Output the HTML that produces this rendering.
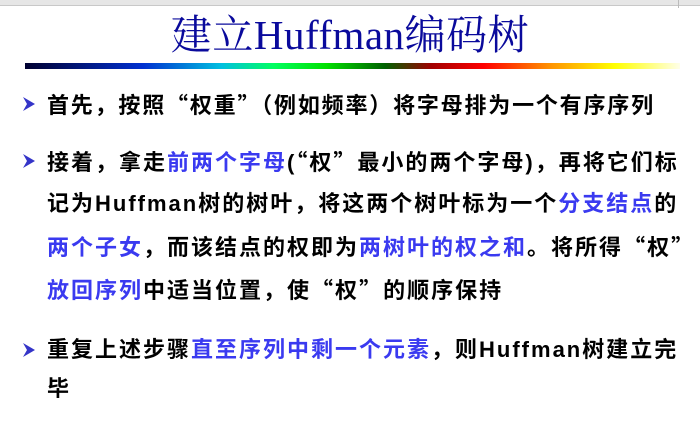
<!DOCTYPE html>
<html><head><meta charset="utf-8"><style>
body{margin:0;width:700px;height:424px;background:#fff;position:relative;overflow:hidden;font-family:"Liberation Sans","Noto Sans CJK SC",sans-serif;}
.top{position:absolute;left:0;top:0;width:700px;height:5px;background:#e6e6e6;border-bottom:1px solid #c8c8c8}
.vr{position:absolute;left:678px;top:0;width:1px;height:8px;background:#bbb}
.title{position:absolute;left:0;width:700px;top:12px;text-align:center;font-family:"Liberation Serif","Noto Serif CJK SC",serif;font-size:41px;color:#0a0a9c;line-height:46px;letter-spacing:0.5px}
.grad{position:absolute;left:25px;top:63px;width:655px;height:6px;background:linear-gradient(to right,#000030,#0030d0 18%,#00c0e0 30%,#00ff60 38%,#00e000 46%,#006000 55%,#a00000 62%,#ff0000 70%,#ff9000 80%,#ffff00 90%,#ffffe8)}
.l{position:absolute;left:47px;font-size:22px;font-weight:bold;line-height:26px;color:#000;white-space:nowrap;letter-spacing:2px}
.q{font-family:"Noto Sans CJK SC",sans-serif}
.b{color:#3a3af0}
.ar{position:absolute;left:22px;width:14px;height:16px}
</style></head><body>
<div class="top"></div><div class="vr"></div>
<div class="title">建立Huffman编码树</div>
<div class="grad"></div>
<svg class="ar" style="top:96px" viewBox="0 0 14 16"><path d="M1 1 L13 8 L1 15 L5 8 Z" fill="#3434c8"/></svg>
<div class="l" style="top:91px;letter-spacing:1.8px">首先，按照<span class="q">“</span>权重<span class="q">”（</span>例如频率<span class="q">）</span>将字母排为一个有序序列</div>
<svg class="ar" style="top:153px" viewBox="0 0 14 16"><path d="M1 1 L13 8 L1 15 L5 8 Z" fill="#3434c8"/></svg>
<div class="l" style="top:148px">接着，拿走<span class="b">前两个字母</span>(<span class="q">“</span>权<span class="q">”</span>最小的两个字母)，再将它们标</div>
<div class="l" style="top:191px">记为Huffman树的树叶，将这两个树叶标为一个<span class="b">分支结点</span>的</div>
<div class="l" style="top:233px"><span class="b">两个子女</span>，而该结点的权即为<span class="b">两树叶的权之和</span>。将所得<span class="q">“</span>权<span class="q">”</span></div>
<div class="l" style="top:276px"><span class="b">放回序列</span>中适当位置，使<span class="q">“</span>权<span class="q">”</span>的顺序保持</div>
<svg class="ar" style="top:342px" viewBox="0 0 14 16"><path d="M1 1 L13 8 L1 15 L5 8 Z" fill="#3434c8"/></svg>
<div class="l" style="top:337px">重复上述步骤<span class="b">直至序列中剩一个元素</span>，则Huffman树建立完</div>
<div class="l" style="top:376px">毕</div>
</body></html>
